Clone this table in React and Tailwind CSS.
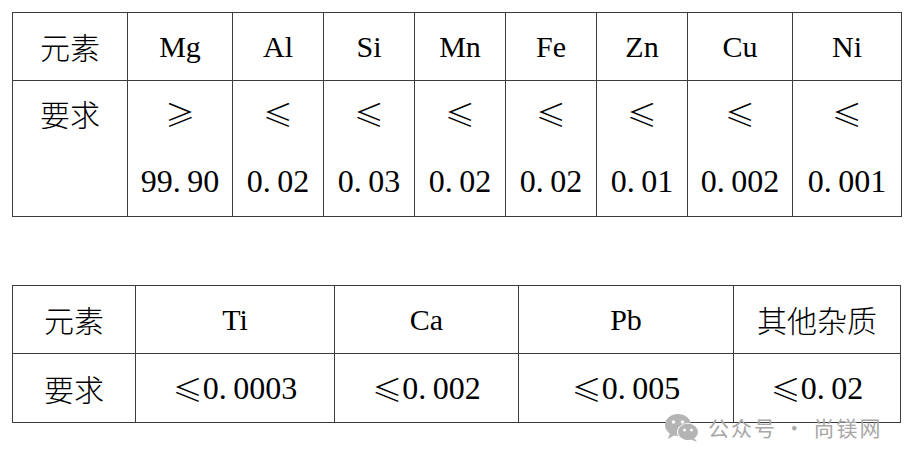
import React from "react";

const serif = "font-['Liberation_Serif',serif]";
const cjk = "font-['Noto_Sans_CJK_SC',sans-serif]";

// period in the source font takes a half-width cell
const Num = ({ value }) => {
  const parts = value.split(".");
  return (
    <span className="font-['Liberation_Serif',serif] text-[32px]">
      {parts[0]}
      {parts.length > 1 && (
        <>
          <span className="inline-block w-[0.45em] text-left">.</span>
          {parts[1]}
        </>
      )}
    </span>
  );
};

const Le = ({ sign = "≤" }) => (
  <span className="font-['Noto_Sans_CJK_SC',sans-serif] text-[30px] font-light">{sign}</span>
);

const elements1 = [
  { name: "Mg", sign: "≥", value: "99.90" },
  { name: "Al", sign: "≤", value: "0.02" },
  { name: "Si", sign: "≤", value: "0.03" },
  { name: "Mn", sign: "≤", value: "0.02" },
  { name: "Fe", sign: "≤", value: "0.02" },
  { name: "Zn", sign: "≤", value: "0.01" },
  { name: "Cu", sign: "≤", value: "0.002" },
  { name: "Ni", sign: "≤", value: "0.001" },
];

const elements2 = [
  { name: "Ti", value: "0.0003" },
  { name: "Ca", value: "0.002" },
  { name: "Pb", value: "0.005" },
  { name: "其他杂质", value: "0.02", cjkName: true },
];

const cell = "border-r border-b border-[#3c3c3c] flex items-center justify-center text-black";

const WeChatIcon = () => (
  <svg width="36" height="30" viewBox="0 0 36 30">
    <ellipse cx="14" cy="12" rx="13" ry="11" fill="#b4b4b4" />
    <path d="M6 20 L4 26 L11 22 Z" fill="#b4b4b4" />
    <circle cx="9.5" cy="9" r="1.8" fill="#fff" />
    <circle cx="18.5" cy="9" r="1.8" fill="#fff" />
    <ellipse cx="24" cy="19" rx="11" ry="9" fill="#fff" />
    <ellipse cx="24" cy="19" rx="10" ry="8.2" fill="#b4b4b4" />
    <path d="M30 25 L33 29 L27 26.5 Z" fill="#b4b4b4" />
    <circle cx="20.5" cy="17" r="1.5" fill="#fff" />
    <circle cx="27.5" cy="17" r="1.5" fill="#fff" />
  </svg>
);

export default function App() {
  return (
    <div className="relative w-[916px] h-[465px] bg-white pt-3 pl-3 overflow-hidden">
      {/* table 1 */}
      <div className="grid grid-cols-[115px_105px_91px_91px_91px_91px_91px_105px_109px] grid-rows-[68px_136px] border-l border-t border-[#3c3c3c] w-fit text-[30px]">
        <div className={`${cell} ${cjk} text-[30px] font-light`}>元素</div>
        {elements1.map((e) => (
          <div key={e.name} className={`${cell} ${serif}`}>
            {e.name}
          </div>
        ))}
        <div className={`${cell} ${cjk} text-[30px] font-light !items-start leading-[64px]`}>要求</div>
        {elements1.map((e) => (
          <div key={e.name} className={`${cell} flex-col !justify-start`}>
            <div className="h-[66px] flex items-center">
              <Le sign={e.sign} />
            </div>
            <div className="h-[70px] flex items-center">
              <Num value={e.value} />
            </div>
          </div>
        ))}
      </div>

      {/* table 2 */}
      <div className="mt-[68px] grid grid-cols-[123px_199px_184px_215px_167px] grid-rows-[68px_69px] border-l border-t border-[#3c3c3c] w-fit text-[30px]">
        <div className={`${cell} ${cjk} text-[30px] font-light`}>元素</div>
        {elements2.map((e) => (
          <div key={e.name} className={`${cell} ${e.cjkName ? `${cjk} text-[30px] font-light` : serif}`}>
            {e.name}
          </div>
        ))}
        <div className={`${cell} ${cjk} text-[30px] font-light`}>要求</div>
        {elements2.map((e) => (
          <div key={e.name} className={cell}>
            <Le />
            <Num value={e.value} />
          </div>
        ))}
      </div>

      {/* watermark */}
      <div className="absolute left-[664px] top-[412px] flex items-center gap-[8px] text-[#a8a8a8]">
        <WeChatIcon />
        <span className={`${cjk} text-[21px] tracking-[2px]`}>公众号 · 尚镁网</span>
      </div>
    </div>
  );
}
